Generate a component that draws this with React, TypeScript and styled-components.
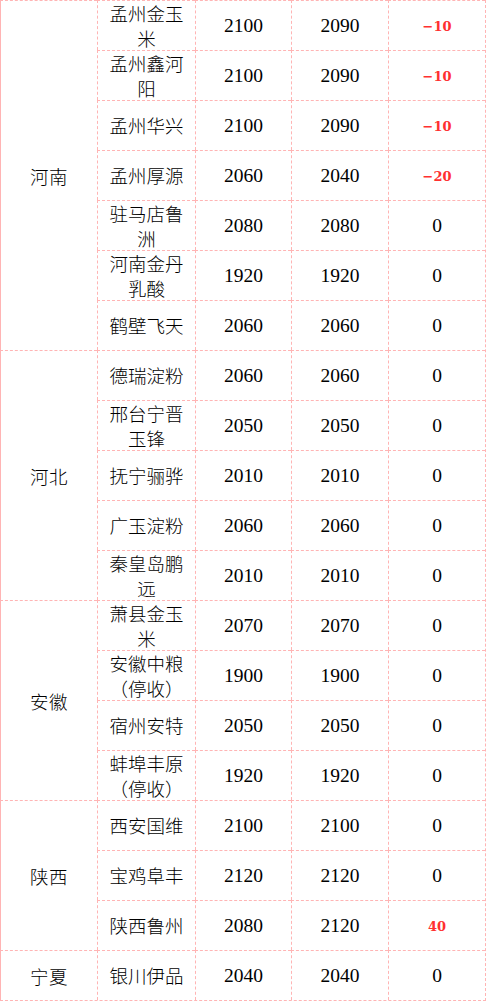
import React from "react";
import styled, { createGlobalStyle } from "styled-components";

const Global = createGlobalStyle`
  html, body { margin: 0; padding: 0; background: #ffffff; }
  body { width: 486px; }
`;

const BORDER = "#ffb4b4";

const Grid = styled.div`
  display: grid;
  grid-template-columns: 97px 98px 96px 97px 97px;
  grid-auto-rows: 50px;
  width: 485px;
  border-right: 1px dashed ${BORDER};
  border-bottom: 1px dashed ${BORDER};
  background: #fff;
`;

const Cell = styled.div<{ $first?: boolean }>`
  box-sizing: border-box;
  display: flex;
  align-items: center;
  justify-content: center;
  text-align: center;
  border-top: 1px dashed ${BORDER};
  border-left: 1px ${(p) => (p.$first ? "solid" : "dashed")} ${BORDER};
  color: #000;
`;

const Region = styled(Cell)<{ $span: number }>`
  grid-column: 1;
  grid-row: span ${(p) => p.$span};
  font-family: "Noto Sans CJK SC", "Noto Sans CJK JP", sans-serif;
  font-size: 18.5px;
  font-weight: 300;
  letter-spacing: 0.5px;
`;

const Name = styled(Cell)`
  grid-column: 2;
  padding: 0 8px;
  font-family: "Noto Sans CJK SC", "Noto Sans CJK JP", sans-serif;
  font-size: 18.5px;
  font-weight: 300;
  line-height: 24.5px;
`;

const Num = styled(Cell)`
  font-family: "Liberation Serif", "Times New Roman", serif;
  font-size: 19.5px;
  padding-top: 1px;
`;

const Change = styled(Num)<{ $red: boolean }>`
  color: ${(p) => (p.$red ? "#ff3030" : "#000")};
  font-family: ${(p) =>
    p.$red ? `"DejaVu Serif", serif` : `"Liberation Serif", "Times New Roman", serif`};
  font-weight: ${(p) => (p.$red ? 700 : 400)};
  font-size: ${(p) => (p.$red ? "13px" : "19.5px")};
`;

type Row = [string, number, number, number];
type Group = { region: string; rows: Row[] };

const data: Group[] = [
  {
    region: "河南",
    rows: [
      ["孟州金玉米", 2100, 2090, -10],
      ["孟州鑫河阳", 2100, 2090, -10],
      ["孟州华兴", 2100, 2090, -10],
      ["孟州厚源", 2060, 2040, -20],
      ["驻马店鲁洲", 2080, 2080, 0],
      ["河南金丹乳酸", 1920, 1920, 0],
      ["鹤壁飞天", 2060, 2060, 0],
    ],
  },
  {
    region: "河北",
    rows: [
      ["德瑞淀粉", 2060, 2060, 0],
      ["邢台宁晋玉锋", 2050, 2050, 0],
      ["抚宁骊骅", 2010, 2010, 0],
      ["广玉淀粉", 2060, 2060, 0],
      ["秦皇岛鹏远", 2010, 2010, 0],
    ],
  },
  {
    region: "安徽",
    rows: [
      ["萧县金玉米", 2070, 2070, 0],
      ["安徽中粮（停收）", 1900, 1900, 0],
      ["宿州安特", 2050, 2050, 0],
      ["蚌埠丰原（停收）", 1920, 1920, 0],
    ],
  },
  {
    region: "陕西",
    rows: [
      ["西安国维", 2100, 2100, 0],
      ["宝鸡阜丰", 2120, 2120, 0],
      ["陕西鲁州", 2080, 2120, 40],
    ],
  },
  {
    region: "宁夏",
    rows: [["银川伊品", 2040, 2040, 0]],
  },
];

const fmt = (n: number) => (n < 0 ? "\u2212" + Math.abs(n) : String(n));

export default function App() {
  return (
    <>
      <Global />
      <Grid>
        {data.map((g) => (
          <React.Fragment key={g.region}>
            <Region $first $span={g.rows.length}>
              {g.region}
            </Region>
            {g.rows.map(([name, a, b, c]) => (
              <React.Fragment key={name}>
                <Name>{name}</Name>
                <Num>{a}</Num>
                <Num>{b}</Num>
                <Change $red={c !== 0}>{fmt(c)}</Change>
              </React.Fragment>
            ))}
          </React.Fragment>
        ))}
      </Grid>
    </>
  );
}
